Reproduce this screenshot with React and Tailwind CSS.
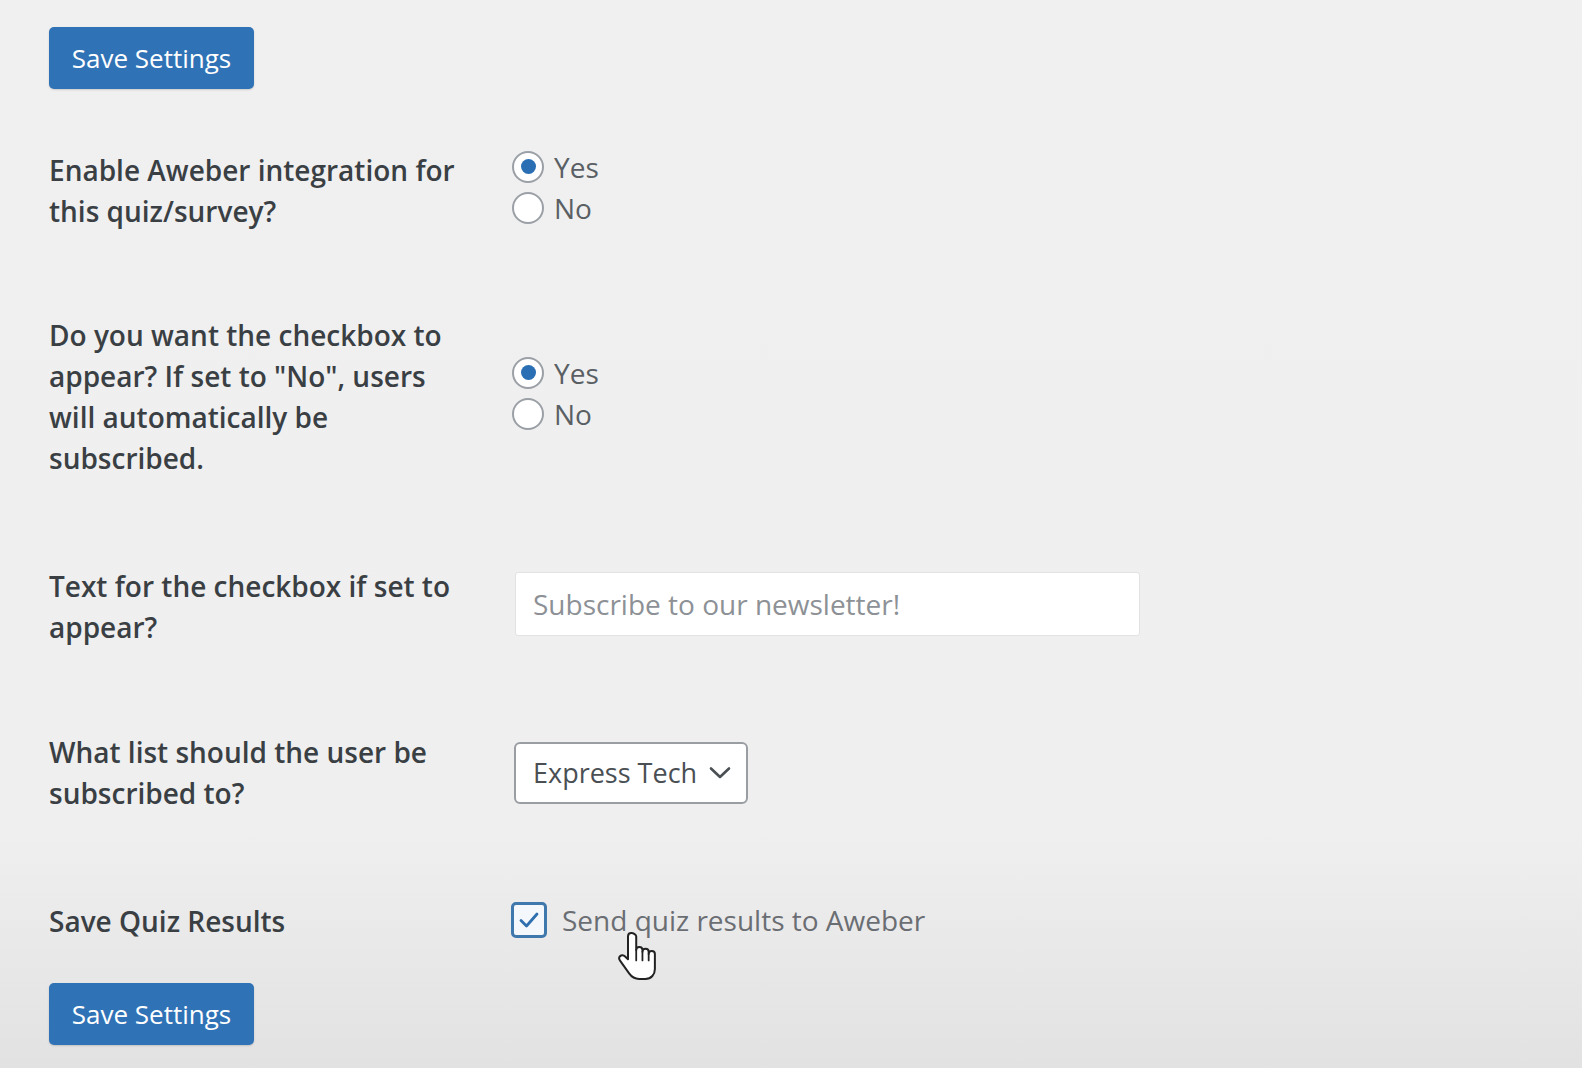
import React from "react";

const font = { fontFamily: '"Open Sans", "Noto Sans", "Liberation Sans", sans-serif' };

function SaveButton() {
  return (
    <button className="h-[62px] w-[205px] rounded-[5px] bg-[#2f72b6] text-[26px] text-white leading-none shadow-[0_1px_2px_rgba(0,0,0,0.15)]">
      Save Settings
    </button>
  );
}

function Radio({ checked, label }) {
  return (
    <label className="flex items-center h-[41px]">
      <span className="relative flex h-[32px] w-[32px] items-center justify-center rounded-full border-2 border-[#9aa0a6] bg-white">
        {checked && <span className="h-[15px] w-[15px] rounded-full bg-[#2a6fb4]" />}
      </span>
      <span className="ml-[10px] text-[28px] text-[#5a5f64]">{label}</span>
    </label>
  );
}

function Row({ label, children, ctrlPad, className = "" }) {
  return (
    <div className={"flex " + className}>
      <div className="w-[464px] shrink-0 pr-[50px] text-[28px] font-semibold leading-[41px] text-[#3a3f44]">
        {label}
      </div>
      <div className={ctrlPad}>{children}</div>
    </div>
  );
}

function Hand() {
  return (
    <svg width="40" height="54" viewBox="0 0 18 23" className="absolute left-[618px] top-[929px]">
      <path
        d="M6 1.2C5.1 1.2 4.5 1.9 4.5 2.7V13L3.2 11.7C2.5 11 1.5 11 0.9 11.6C0.4 12.2 0.5 13.1 1 13.7L5 19.3C6 20.7 7.3 21.8 9.5 21.8H12.3C15 21.8 16.6 19.8 16.6 17.3V10.6C16.6 9.8 16 9.2 15.2 9.2C14.4 9.2 13.8 9.8 13.8 10.6V9.6C13.8 8.8 13.2 8.2 12.4 8.2C11.6 8.2 11 8.8 11 9.6V8.8C11 8 10.4 7.4 9.6 7.4C8.8 7.4 8.2 8 8.2 8.8V2.7C8.2 1.9 7 1.2 6 1.2Z"
        fill="white"
        stroke="#222"
        strokeWidth="0.9"
        strokeLinejoin="round"
      />
      <path d="M8.2 8.8V13.5M11 9.6V13.5M13.8 10.6V13.5" stroke="#222" strokeWidth="0.8" strokeLinecap="round" />
    </svg>
  );
}

export default function App() {
  return (
    <div
      style={font}
      className="relative min-h-[1068px] w-[1582px] overflow-hidden bg-[linear-gradient(to_bottom,#f0f0f1_0%,#efeff0_78%,#e2e2e3_100%)] pl-[49px] pt-[27px]"
    >
      <SaveButton />
      <div className="mt-[20px] flex flex-col pt-[41px] pb-[40px]">
        <Row label="Enable Aweber integration for this quiz/survey?" ctrlPad="-mt-[4px] -ml-[1px]">
          <Radio checked label="Yes" />
          <Radio label="No" />
        </Row>
        <Row
          className="mt-[83px]"
          label={'Do you want the checkbox to appear? If set to "No", users will automatically be subscribed.'}
          ctrlPad="pt-[37px] -ml-[1px]"
        >
          <Radio checked label="Yes" />
          <Radio label="No" />
        </Row>
        <Row className="mt-[87px]" label="Text for the checkbox if set to appear?" ctrlPad="pt-[6px] ml-[2px]">
          <div className="flex h-[64px] w-[625px] items-center rounded-[3px] border border-[#e2e2e4] bg-white px-[17px] text-[28px] text-[#8d9196]">
            Subscribe to our newsletter!
          </div>
        </Row>
        <Row className="mt-[84px]" label="What list should the user be subscribed to?" ctrlPad="pt-[10px] ml-[1px]">
          <div className="flex h-[62px] w-[234px] items-center justify-between rounded-[6px] border-2 border-[#9a9ea3] bg-white pl-[17px] pr-[15px] text-[27px] text-[#4a4f54]">
            <span>Express Tech</span>
            <svg width="22" height="14" viewBox="0 0 22 14">
              <path d="M2 2.5L11 11L20 2.5" fill="none" stroke="#4a4f54" strokeWidth="2.6" strokeLinecap="round" strokeLinejoin="round" />
            </svg>
          </div>
        </Row>
        <Row className="mt-[87px]" label="Save Quiz Results" ctrlPad="-mt-[2px] -ml-[2px]">
          <label className="flex items-center h-[41px]">
            <span className="flex h-[36px] w-[36px] items-center justify-center rounded-[5px] border-[3px] border-[#3f78ad] bg-[#f4f8fc]">
              <svg width="22" height="18" viewBox="0 0 22 18">
                <path d="M3 9.5L8.5 15L19 3" fill="none" stroke="#2f6fb0" strokeWidth="2.8" strokeLinecap="round" strokeLinejoin="round" />
              </svg>
            </span>
            <span className="ml-[15px] text-[28px] text-[#6a6e73]">Send quiz results to Aweber</span>
          </label>
        </Row>
      </div>
      <div className="mt-[1px]">
        <SaveButton />
      </div>
      <Hand />
    </div>
  );
}
